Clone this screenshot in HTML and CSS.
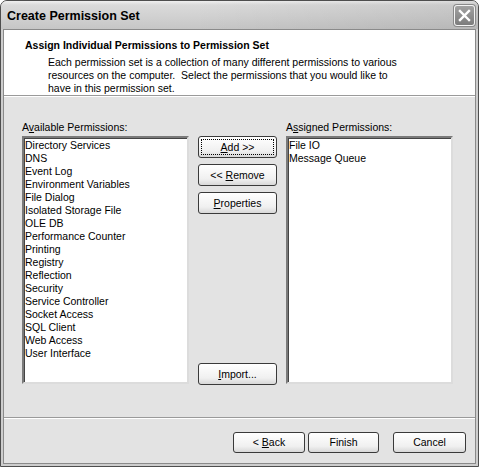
FILE: index.html
```html
<!DOCTYPE html>
<html>
<head>
<meta charset="utf-8">
<link rel="stylesheet" href="styles.css">
</head>
<body>
<div class="window">
  <div class="titlebar">
    <span class="title">Create Permission Set</span>
    <span class="close"><svg width="13" height="13" viewBox="0 0 13 13"><path d="M2 2 L11 11 M11 2 L2 11" stroke="#fff" stroke-width="2.4" stroke-linecap="square"/></svg></span>
  </div>
  <div class="frame">
    <div class="header">
      <div class="heading">Assign Individual Permissions to Permission Set</div>
      <div class="desc">Each permission set is a collection of many different permissions to various<br>resources on the computer.&nbsp; Select the permissions that you would like to<br>have in this permission set.</div>
    </div>
    <div class="content">
      <div class="col">
        <div class="label">A<u>v</u>ailable Permissions:</div>
        <div class="list">
          <div>Directory Services</div>
          <div>DNS</div>
          <div>Event Log</div>
          <div>Environment Variables</div>
          <div>File Dialog</div>
          <div>Isolated Storage File</div>
          <div>OLE DB</div>
          <div>Performance Counter</div>
          <div>Printing</div>
          <div>Registry</div>
          <div>Reflection</div>
          <div>Security</div>
          <div>Service Controller</div>
          <div>Socket Access</div>
          <div>SQL Client</div>
          <div>Web Access</div>
          <div>User Interface</div>
        </div>
      </div>
      <div class="btncol">
        <div class="btn focus"><span class="focusbox"><span><u>A</u>dd &gt;&gt;</span></span></div>
        <div class="btn"><span>&lt;&lt; <u>R</u>emove</span></div>
        <div class="btn"><span><u>P</u>roperties</span></div>
        <div class="btn push"><span><u>I</u>mport...</span></div>
      </div>
      <div class="col">
        <div class="label">A<u>s</u>signed Permissions:</div>
        <div class="list">
          <div>File IO</div>
          <div>Message Queue</div>
        </div>
      </div>
    </div>
    <div class="footer">
      <div class="btn back"><span>&lt; <u>B</u>ack</span></div>
      <div class="btn finish"><span>Finish</span></div>
      <div class="btn cancel"><span>Cancel</span></div>
    </div>
  </div>
</div>
</body>
</html>
```

FILE: styles.css
```css
* { box-sizing: border-box; }
html, body { margin: 0; padding: 0; }
body {
  width: 479px;
  height: 467px;
  background: #fff;
  font-family: "Liberation Sans", Arial, sans-serif;
  font-size: 10.5px;
  color: #000;
}
.window {
  width: 479px;
  height: 467px;
  display: flex;
  flex-direction: column;
  border: 1px solid #4e4e4e;
  border-radius: 7px 7px 0 0;
  background: #cdcdcd;
  overflow: hidden;
}
.titlebar {
  height: 28px;
  flex: none;
  display: flex;
  align-items: center;
  justify-content: space-between;
  padding: 0 3px 0 6px;
  background: linear-gradient(to right, rgba(255,255,255,0) 40%, rgba(0,0,0,0.08) 100%),
              linear-gradient(to bottom, #f0f0f0 0, #dadada 4px, #d0d0d0 60%, #c6c6c6 100%);
}
.title {
  font-weight: bold;
  font-size: 12.5px;
  color: #000;
  margin-top: 1px;
}
.close {
  width: 21px;
  height: 21px;
  border: 1px solid #f4f4f4;
  border-radius: 3px;
  background: linear-gradient(#a2a2a2, #7c7c7c);
  display: flex;
  align-items: center;
  justify-content: center;
  box-shadow: 0 0 0 1px #8a8a8a;
}
.frame {
  flex: 1;
  display: flex;
  flex-direction: column;
  margin: 0 2px 2px;
  border: 1px solid #8a8a8a;
  background: #e3e3e3;
}
.header {
  height: 66px;
  flex: none;
  background: #fff;
  border-bottom: 1px solid #9a9a9a;
  padding: 9px 0 0 21px;
  line-height: 13px;
}
.heading { font-weight: bold; }
.desc { margin-top: 4px; padding-left: 23px; }
.content {
  flex: 1;
  display: flex;
  gap: 9px;
  padding: 24px 22px 0 18px;
  border-top: 1px solid #fff;
}
.col { width: 167px; display: flex; flex-direction: column; }
.label { line-height: 13px; margin-bottom: 2px; }
.list {
  height: 248px;
  background: #fff;
  border: 2px solid;
  border-color: #7a7a7a #dcdcdc #dcdcdc #7a7a7a;
  box-shadow: inset 1px 1px 0 #444;
  padding: 1px 0 0 1px;
  line-height: 13px;
}
.btncol {
  width: 79px;
  margin-top: 15px;
  height: 249px;
  display: flex;
  flex-direction: column;
  gap: 6px;
}
.btn {
  height: 22px;
  border: 1px solid #3a3a3a;
  border-radius: 3px;
  background: linear-gradient(#ffffff, #f0f0f0 70%, #d8d8d8);
  display: flex;
  align-items: center;
  justify-content: center;
  line-height: 13px;
  flex: none;
  white-space: pre;
}
.focusbox {
  flex: 1;
  align-self: stretch;
  margin: 2px;
  border: 1px dotted #000;
  display: flex;
  align-items: center;
  justify-content: center;
}
.push { margin-top: auto; }
.footer {
  height: 46px;
  flex: none;
  border-top: 1px solid #9a9a9a;
  box-shadow: inset 0 1px 0 #fff;
  display: flex;
  justify-content: flex-end;
  align-items: flex-start;
  padding: 14px 9px 0 0;
}
.footer .btn { height: 21px; }
.back { width: 72px; }
.finish { width: 71px; margin-left: 3px; }
.cancel { width: 73px; margin-left: 14px; }
```
